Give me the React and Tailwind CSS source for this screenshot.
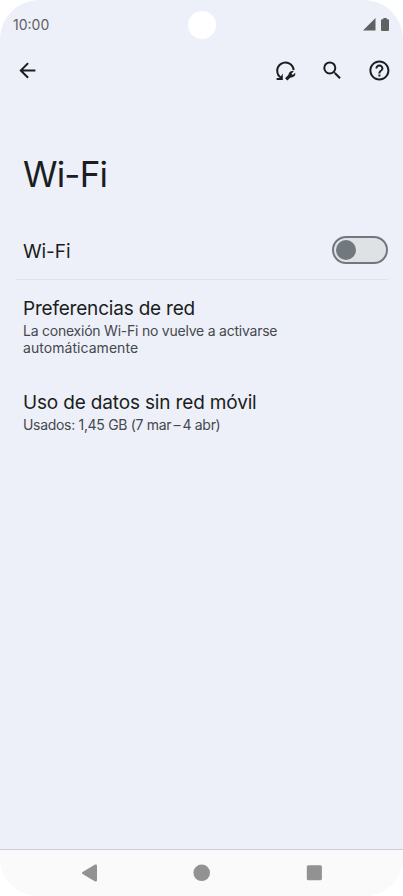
function BackIcon() {
    return (
        <svg className="size-6" viewBox="-0.4 0.6 24 24" fill="#1b1d20">
            <path d="M20 11H7.83l5.59-5.59L12 4l-8 8 8 8 1.41-1.41L7.83 13H20v-2z" />
        </svg>
    );
}

function ResetNetworkIcon() {
    return (
        <svg className="h-6 w-6" viewBox="0 0.3 24 24" fill="none" stroke="#1b1d20" strokeWidth="2">
            <path d="M20.6 11.4A8.2 8.2 0 1 0 8.4 19.2" />
            <path d="M9.8 14.8v6.4H3.6v-2h3.2z" fill="#1b1d20" stroke="none" />
            <path d="M13.2 20.7l4-3.9" strokeWidth="3.2" />
            <path
                d="M22.2 14l-2.4 2.4-1.4-1.4 2.4-2.4a3.8 3.8 0 0 0-5 4.9 3.8 3.8 0 0 0 6.4-3.5z"
                fill="#1b1d20"
                stroke="none"
            />
        </svg>
    );
}

function SearchIcon() {
    return (
        <svg className="size-6" viewBox="-0.3 0.6 24 24" fill="#1b1d20">
            <path d="M15.5 14h-.79l-.28-.27A6.47 6.47 0 0 0 16 9.5 6.5 6.5 0 1 0 9.5 16c1.61 0 3.09-.59 4.23-1.57l.27.28v.79l5 4.99L20.49 19l-4.99-5zm-6 0C7.01 14 5 11.99 5 9.5S7.01 5 9.5 5 14 7.01 14 9.5 11.99 14 9.5 14z" />
        </svg>
    );
}

function HelpIcon() {
    return (
        <svg className="size-6" viewBox="-0.4 0.6 24 24" fill="#1b1d20">
            <path d="M11 18h2v-2h-2v2zm1-16C6.48 2 2 6.48 2 12s4.48 10 10 10 10-4.48 10-10S17.52 2 12 2zm0 18c-4.41 0-8-3.59-8-8s3.59-8 8-8 8 3.59 8 8-3.59 8-8 8zm0-14c-2.21 0-4 1.79-4 4h2c0-1.1.9-2 2-2s2 .9 2 2c0 2-3 1.75-3 5h2c0-2.25 3-2.5 3-5 0-2.21-1.79-4-4-4z" />
        </svg>
    );
}

function StatusBar() {
    return (
        <div className="grid h-[46px] grid-cols-3 items-start text-[#5f6163]">
            <span className="pt-4 pl-[13px] text-sm leading-[18px]">10:00</span>
            <div className="mt-[11px] ml-px size-7 justify-self-center rounded-full bg-white" />
            <div className="mt-[18px] mr-3.5 flex items-center gap-[5px] justify-self-end">
                <svg className="h-[13px] w-[13px]" viewBox="0 0 13 13" fill="currentColor">
                    <path d="M12.5 0v12.5H0z" />
                </svg>
                <svg className="h-[13px] w-[8px]" viewBox="0 0 8 13" fill="currentColor">
                    <path d="M2.3 0h3.4v1.3H7a1 1 0 0 1 1 1V12a1 1 0 0 1-1 1H1a1 1 0 0 1-1-1V2.3a1 1 0 0 1 1-1h1.3z" />
                </svg>
            </div>
        </div>
    );
}

function Toolbar() {
    return (
        <div className="flex h-[50px] items-center justify-between pr-3 pl-[15px]">
            <button aria-label="Atrás">
                <BackIcon />
            </button>
            <div className="flex items-center gap-[23px]">
                <button aria-label="Restablecer">
                    <ResetNetworkIcon />
                </button>
                <button aria-label="Buscar">
                    <SearchIcon />
                </button>
                <button aria-label="Ayuda">
                    <HelpIcon />
                </button>
            </div>
        </div>
    );
}

function NavBar() {
    return (
        <div className="h-[47px] border-t border-[#cccdd5] bg-[#fafafa]">
            <svg className="h-[46px] w-[403px]" viewBox="0 0 403 46" fill="#929292">
                <path d="M82.6 22.1l12.1-7.4c1.2-.7 2.3-.2 2.3 1.2v14.2c0 1.4-1.1 1.9-2.3 1.2l-12.1-7.4c-1-.6-1-1.2 0-1.8z" />
                <circle cx="201.7" cy="22.8" r="8.3" />
                <rect x="306.8" y="15.3" width="15.1" height="15" rx="1.5" />
            </svg>
        </div>
    );
}

export default function App() {
    return (
        <div className="h-[896px] w-[403px] bg-white font-['Inter',sans-serif]">
            <div className="flex h-full flex-col overflow-hidden rounded-[39px] bg-[#edf0f8] text-[#1b1d20]">
                <StatusBar />
                <Toolbar />
                <main className="flex-1">
                    <h1 className="mt-[57px] ml-[23px] text-[35px] leading-[42px] tracking-[-0.8px]">Wi-Fi</h1>

                    <div className="mt-[41px] ml-4 mr-[15px] flex h-[44px] items-start justify-between border-b border-[#e0e2e9] pl-[7px]">
                        <span className="mt-[4px] text-[19px] leading-6 tracking-[-0.1px]">Wi-Fi</span>
                        <button
                            role="switch"
                            aria-checked="false"
                            aria-label="Wi-Fi"
                            className="flex h-7 w-[56px] items-center rounded-full border-2 border-[#72777d] bg-[#dfe2e5] pl-[2px]"
                        >
                            <span className="size-5 rounded-full bg-[#71787e]" />
                        </button>
                    </div>

                    <section className="mt-[16px] ml-[23px]">
                        <h2 className="text-[19px] leading-[26px] tracking-[-0.2px]">Preferencias de red</h2>
                        <p className="text-sm leading-[17px] tracking-[-0.23px] text-[#45484d]">
                            La conexión Wi-Fi no vuelve a activarse
                            <br />
                            <span className="tracking-[0.05px]">automáticamente</span>
                        </p>
                    </section>

                    <section className="mt-[34px] ml-[23px]">
                        <h2 className="text-[19px] leading-[26px] tracking-[-0.16px]">Uso de datos sin red móvil</h2>
                        <p className="text-sm leading-[17px] tracking-[-0.31px] text-[#45484d]">
                            Usados: 1,45 GB (7 mar&#8201;–&#8201;4 abr)
                        </p>
                    </section>
                </main>
                <NavBar />
            </div>
        </div>
    );
}
